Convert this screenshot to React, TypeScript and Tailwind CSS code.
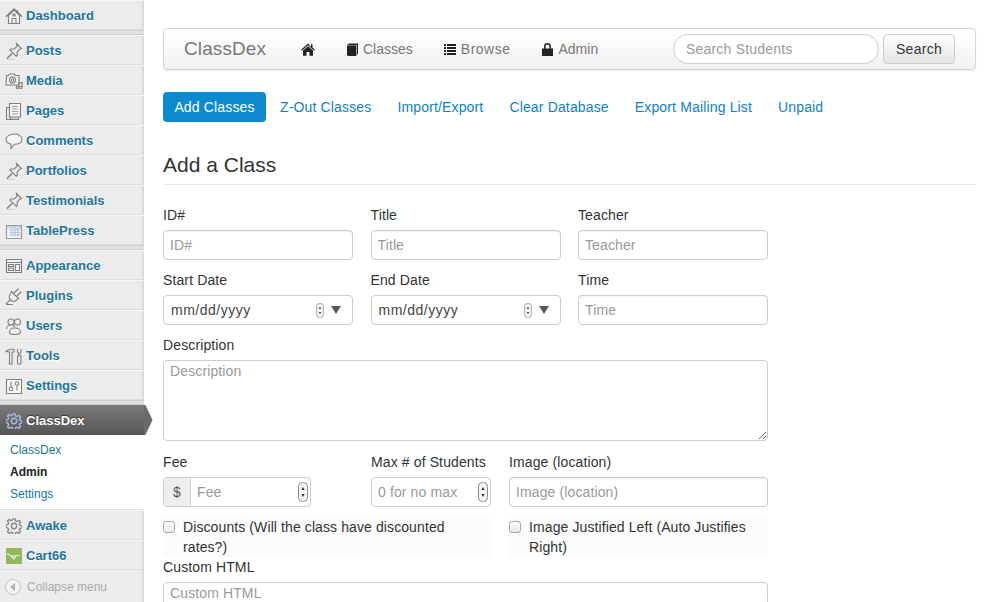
import React from 'react';

type IconProps = { className?: string };

const stroke = { fill: 'none', stroke: '#7f7f7f', strokeWidth: 1.1 };

const HouseIcon = () => (
  <svg width="18" height="18" viewBox="0 0 18 18" {...stroke}>
    <path d="M3.500 8.500v8h11v-8L9 3z" fill="#f6f6f6" />
    <path d="M1 9.800 9 2l8 7.800" strokeWidth="1.500" />
    <path d="M7 16.500v-5h4v5M12.500 3v3" />
    <path d="M8 7h2v2H8z" fill="#ccc" />
  </svg>
);
const PinIcon = () => (
  <svg width="18" height="18" viewBox="0 0 18 18" {...stroke}>
    <path d="M11.500 1.500l5 5-1.800.7-2.700 3.300.4 2.700-1.200 1.100-6.300-6.300 1.100-1.200 2.700.4 3.300-2.700z" fill="#e9e9e9" />
    <path d="M7 11.500 2 16.500" strokeWidth="1.400" />
    <path d="M1 17.500h9" stroke="#cfcfcf" />
  </svg>
);
const MediaIcon = () => (
  <svg width="18" height="18" viewBox="0 0 18 18" {...stroke}>
    <path d="M1.500 3.500h2l1-1.500h5l1 1.500h3.500v9.500h-13z" fill="#efefef" />
    <circle cx="7.500" cy="8" r="3" fill="#fafafa" />
    <circle cx="7.500" cy="8" r="1.200" />
    <circle cx="12.500" cy="15.500" r="1.200" />
    <circle cx="16" cy="15.500" r="1.200" />
    <path d="M13.700 15.500V11l3.400-.5V15" />
  </svg>
);
const PagesIcon = () => (
  <svg width="18" height="18" viewBox="0 0 18 18" {...stroke}>
    <path d="M1.500 5.500h4v12h8v-2" fill="#d9d9d9" />
    <path d="M1.500 5.500v12h4" />
    <path d="M4.500 1.500h11v13.500h-11z" fill="#f5f5f5" />
    <path d="M7 4.500h6M7 7h6M7 9.500h6M7 12h6" stroke="#a0a0a0" />
  </svg>
);
const CommentIcon = () => (
  <svg width="18" height="18" viewBox="0 0 18 18" {...stroke}>
    <path d="M9 2c4.200 0 8 1.900 8 5.200s-3.600 5-7.500 5L6 16.500V12C3 11.500 1 9.800 1 7.200S4.800 2 9 2z" fill="#f4f4f4" />
  </svg>
);
const TableIcon = () => (
  <svg width="18" height="18" viewBox="0 0 18 18" {...stroke}>
    <path d="M1.500 3.500h15v13h-15z" fill="#f4f4f4" stroke="#9a9a9a" />
    <path d="M2 4h14v2.500H2z" fill="#c3d2e4" stroke="none" />
    <path d="M4.500 8h11M4.500 10.500h11M4.500 13h11M7 6.500v8M10 6.500v8M13 6.500v8" stroke="#b3c3d8" />
  </svg>
);
const AppearanceIcon = () => (
  <svg width="18" height="18" viewBox="0 0 18 18" {...stroke}>
    <path d="M1.500 2.500h15v13h-15z" fill="#f4f4f4" />
    <path d="M1.500 5.500h15M3.500 7.500h5v2h-5zM3.500 11h5v2.500h-5zM10.500 7.500h4v6h-4z" />
  </svg>
);
const PlugIcon = () => (
  <svg width="18" height="18" viewBox="0 0 18 18" {...stroke}>
    <path d="M6.500 4.500l7 7-2.500 2c-1.500 1.200-3.800 1-5.300-.5s-1.700-3.800-.7-5.300z" fill="#efefef" />
    <path d="M9 6l4.500-4.500M12 9l4.500-4.500M5.500 12.500 2.500 15.500l-1.500 1.500M1 17.500h7" />
  </svg>
);
const UsersIcon = () => (
  <svg width="18" height="18" viewBox="0 0 18 18" {...stroke}>
    <circle cx="6" cy="5" r="3" fill="#f4f4f4" />
    <circle cx="12.500" cy="5" r="3" fill="#f4f4f4" />
    <path d="M1.500 12c0-2.500 2-4 4-4h1c2 0 3 1 3 2" fill="#f4f4f4" />
    <path d="M4.500 15.500c0-2.500 2-4.500 4.500-4.500h1.500c2.500 0 5 1.800 5 4 0 1.500-2 2.500-5.500 2.500s-5.500-.5-5.500-2z" fill="#f4f4f4" />
  </svg>
);
const ToolsIcon = () => (
  <svg width="18" height="18" viewBox="0 0 18 18" {...stroke}>
    <path d="M1 4.500c2-2 6-2.500 8-2v2.500H7v12H4.500V5z" fill="#efefef" />
    <path d="M12.500 2v3l1 1v3h-1v7c0 1.500 3.500 1.500 3.500 0V9h-1V6l1-1V2" fill="#efefef" />
  </svg>
);
const SettingsIcon = () => (
  <svg width="18" height="18" viewBox="0 0 18 18" {...stroke}>
    <path d="M1.500 2.500h15v14h-15z" fill="#f8f8f8" />
    <circle cx="6" cy="12" r="1.800" />
    <circle cx="12" cy="6.500" r="1.800" />
    <path d="M6 4.500v5.500M12 8.500v5" />
  </svg>
);
const GearIcon = ({ color = '#8a8a8a', fill = 'none' }: { color?: string; fill?: string }) => (
  <svg width="16" height="16" viewBox="0 0 18 18" fill={fill} stroke={color} strokeWidth="1.600">
    <path d="M7.700 1h2.600l.4 2.300 1.700.7 2-1.300 1.900 1.900-1.300 2 .7 1.700 2.300.4v2.600l-2.300.4-.7 1.700 1.300 2-1.900 1.900-2-1.300-1.700.7-.4 2.300H7.700l-.4-2.300-1.700-.7-2 1.300-1.900-1.900 1.300-2-.7-1.700L0 10.300V7.700l2.300-.4.7-1.700-1.300-2 1.900-1.900 2 1.300 1.700-.7z" />
    <circle cx="9" cy="9" r="3" />
  </svg>
);
const CartIcon = () => (
  <svg width="16" height="16" viewBox="0 0 16 16">
    <rect width="16" height="16" fill="#92b75f" />
    <path d="M1 5.500 5 8l9-.5M5 8l3 3 2-3" fill="none" stroke="#eef4e2" strokeWidth="1.200" />
  </svg>
);

const HomeGlyph = ({ className }: IconProps) => (
  <svg className={className} width="14" height="13" viewBox="0 0 14 13" fill="#222">
    <path d="M7 .5 0 6.800l.8.9L7 2.200l6.200 5.500.8-.9-2.500-2.200V1.200H10v2.700z" />
    <path d="M2 7.500 7 3.200l5 4.300v5.300H8.500V9h-3v3.800H2z" />
  </svg>
);
const BookGlyph = ({ className }: IconProps) => (
  <svg className={className} width="11" height="13" viewBox="0 0 11 13" fill="#222">
    <path d="M0 2 2 .5h9v10.500l-1 .5V2.200H2z" />
    <path d="M0 2.500h9.400V13H1.300L0 12z" />
  </svg>
);
const ListGlyph = ({ className }: IconProps) => (
  <svg className={className} width="12" height="11" viewBox="0 0 12 11" fill="#222">
    <path d="M0 0h2v2H0zM3 0h9v2H3zM0 3h2v2H0zM3 3h9v2H3zM0 6h2v2H0zM3 6h9v2H3zM0 9h2v2H0zM3 9h9v2H3z" />
  </svg>
);
const LockGlyph = ({ className }: IconProps) => (
  <svg className={className} width="11" height="13" viewBox="0 0 11 13">
    <path d="M0 5.500h11V13H0z" fill="#222" />
    <path d="M2.800 6V3.500a2.700 2.700 0 0 1 5.400 0V6" fill="none" stroke="#222" strokeWidth="1.500" />
  </svg>
);

const Spinner = ({ small }: { small?: boolean }) => (
  <svg width={small ? 8 : 10} height={small ? 15 : 20} viewBox="0 0 10 20" className="shrink-0">
    <rect x=".5" y=".5" width="9" height="19" rx="4" fill="#f4f4f4" stroke="#8c8c8c" />
    <path d="M5 5 3.400 8h3.200zM5 15 3.400 12h3.200z" fill="#333" />
  </svg>
);

const topMenu = [
  { label: 'Posts', icon: <PinIcon /> },
  { label: 'Media', icon: <MediaIcon /> },
  { label: 'Pages', icon: <PagesIcon /> },
  { label: 'Comments', icon: <CommentIcon /> },
  { label: 'Portfolios', icon: <PinIcon /> },
  { label: 'Testimonials', icon: <PinIcon /> },
  { label: 'TablePress', icon: <TableIcon /> },
];

const midMenu = [
  { label: 'Appearance', icon: <AppearanceIcon /> },
  { label: 'Plugins', icon: <PlugIcon /> },
  { label: 'Users', icon: <UsersIcon /> },
  { label: 'Tools', icon: <ToolsIcon /> },
  { label: 'Settings', icon: <SettingsIcon /> },
];

const SideRow = ({ label, icon }: { label: string; icon: React.ReactNode }) => (
  <div className="flex h-[30px] shrink-0 items-center gap-[3px] border-t border-b border-t-[#f6f6f6] border-b-[#dcdcdc] pt-[1px] pl-[5px] text-[13px] font-bold text-[#21759b] [text-shadow:0_1px_0_#fff]">
    <span className="flex w-[18px] justify-center">{icon}</span>
    <span>{label}</span>
  </div>
);

const Separator = () => <div className="h-[5px] shrink-0 border-y border-y-[#cfcfcf] bg-[#e0e0e0]" />;

const Sidebar = () => (
  <aside className="relative flex h-[602px] w-[144px] shrink-0 flex-col bg-[#ececec] shadow-[inset_-4px_0_3px_-3px_#cccccc]">
    <SideRow label="Dashboard" icon={<HouseIcon />} />
    <Separator />
    {topMenu.map(item => <SideRow key={item.label} {...item} />)}
    <Separator />
    {midMenu.map(item => <SideRow key={item.label} {...item} />)}
    <Separator />
    <div className="relative flex h-[30px] shrink-0 items-center gap-[3px] bg-gradient-to-b from-[#7b7b7b] to-[#555555] pt-[1px] pl-[5px] text-[13px] font-bold text-white [text-shadow:0_-1px_1px_#333]">
      <span className="flex w-[18px] justify-center"><GearIcon color="#a9b7dc" /></span>
      <span>ClassDex</span>
      <svg className="absolute left-full top-0" width="9" height="30" viewBox="0 0 9 30">
        <path d="M0 0h1.500L8.500 15 1.500 30H0z" fill="#6b6b6b" />
      </svg>
    </div>
    <div className="flex h-[75px] shrink-0 flex-col border-b border-b-[#dcdcdc] bg-white pt-[4px] pl-[10px] text-xs leading-[22px] text-[#21759b]">
      <span>ClassDex</span>
      <span className="font-bold text-[#222]">Admin</span>
      <span>Settings</span>
    </div>
    <SideRow label="Awake" icon={<GearIcon />} />
    <SideRow label="Cart66" icon={<CartIcon />} />
    <div className="flex h-[34px] shrink-0 items-center gap-[6px] pl-[5px] text-xs text-[#aaaaaa]">
      <span className="flex h-[16px] w-[16px] items-center justify-center rounded-full border border-[#c4c4c4] bg-[#f4f4f4]">
        <span className="mr-[2px] h-0 w-0 border-y-[4px] border-r-[5px] border-y-transparent border-r-[#b0b0b0]" />
      </span>
      Collapse menu
    </div>
  </aside>
);

const NavLink = ({ icon, label, className }: { icon: React.ReactNode; label?: string; className?: string }) => (
  <span className={`flex items-center gap-[5px] text-sm text-[#777777] ${className ?? ''}`}>
    {icon}
    {label}
  </span>
);

const Navbar = () => (
  <nav className="flex h-[42px] items-center rounded border border-[#d5d5d5] bg-gradient-to-b from-white to-[#f2f2f2] pl-[20px] pr-[20px] shadow-[0_1px_2px_rgba(0,0,0,0.07)]">
    <span className="w-[117px] text-[19px] tracking-[0.1px] text-[#777777]">ClassDex</span>
    <div className="flex items-center">
      <NavLink icon={<HomeGlyph />} />
      <span className="w-[32px]" />
      <NavLink icon={<BookGlyph />} label="Classes" />
      <span className="w-[31px]" />
      <NavLink icon={<ListGlyph />} label="Browse" className="tracking-[0.5px]" />
      <span className="w-[32px]" />
      <NavLink icon={<LockGlyph />} label="Admin" />
    </div>
    <div className="ml-auto flex items-center gap-[4px]">
      <input
        placeholder="Search Students"
        className="h-[30px] w-[206px] rounded-full border border-[#cccccc] bg-white px-[12px] text-sm tracking-[0.2px] outline-none placeholder:text-[#999999]"
      />
      <button className="h-[30px] w-[72px] rounded border border-[#cccccc] bg-gradient-to-b from-white to-[#e4e4e4] text-sm tracking-[0.3px] text-[#333333]">
        Search
      </button>
    </div>
  </nav>
);

const tabs = ['Z-Out Classes', 'Import/Export', 'Clear Database', 'Export Mailing List', 'Unpaid'];

const Tabs = () => (
  <div className="mt-[22px] flex h-[30px] items-center text-sm tracking-[0.15px] text-[#0e82c9]">
    <span className="flex h-[30px] w-[103px] items-center justify-center rounded bg-[#0d8acf] text-white">Add Classes</span>
    <div className="ml-[14px] flex gap-[26px]">
      {tabs.map(t => <span key={t}>{t}</span>)}
    </div>
  </div>
);

const inputCls = 'h-[30px] w-full rounded border border-[#cccccc] bg-white px-[6px] text-sm tracking-[0.12px] text-[#555555] outline-none placeholder:text-[#999999] shadow-[inset_0_1px_1px_rgba(0,0,0,0.05)]';

const areaCls = 'mt-[7px] block w-full rounded border border-[#cccccc] bg-white px-[6px] py-[2px] text-sm leading-[17px] tracking-[0.12px] outline-none placeholder:text-[#999999]';

const Label = ({ children }: { children: React.ReactNode }) => (
  <label className="block h-[15px] text-sm leading-[15px] tracking-[0.12px] text-[#333333]">{children}</label>
);

const Field = ({ label, width, children }: { label: string; width: string; children: React.ReactNode }) => (
  <div className={width}>
    <Label>{label}</Label>
    <div className="mt-[7px]">{children}</div>
  </div>
);

const DateInput = () => (
  <div className="flex h-[30px] items-center rounded border border-[#cccccc] bg-white pl-[7px] pr-[11px] text-sm text-[#444444]">
    <span className="flex-1 tracking-[0.5px]">mm/dd/yyyy</span>
    <Spinner small />
    <span className="ml-[7px] h-0 w-0 border-x-[5px] border-t-[8px] border-x-transparent border-t-[#555555]" />
  </div>
);

const NumberInput = ({ placeholder, addon }: { placeholder: string; addon?: boolean }) => (
  <div className="flex h-[30px] items-center rounded border border-[#cccccc] bg-white text-sm tracking-[0.12px] text-[#999999]">
    {addon && (
      <span className="flex h-full w-[27px] items-center justify-center rounded-l border-r border-[#cccccc] bg-[#eeeeee] text-[#555555]">$</span>
    )}
    <span className="flex-1 pl-[6px]">{placeholder}</span>
    <span className="mr-[2px] flex"><Spinner /></span>
  </div>
);

const CheckField = ({ width, children }: { width: string; children: React.ReactNode }) => (
  <div className={`${width} flex h-[40px] items-start bg-[#fbfbfb] text-sm leading-[20px] tracking-[0.1px] text-[#333333]`}>
    <span className="mt-[4px] h-[12px] w-[12px] shrink-0 rounded-[3px] border border-[#a9a9a9] bg-gradient-to-b from-white to-[#e8e8e8]" />
    <span className="ml-[8px] pr-[12px]">{children}</span>
  </div>
);

const Form = () => (
  <div className="mt-[23px] flex w-[605px] flex-col">
    <div className="flex justify-between">
      <Field label="ID#" width="w-[190px]"><input placeholder="ID#" className={inputCls} /></Field>
      <Field label="Title" width="w-[190px]"><input placeholder="Title" className={inputCls} /></Field>
      <Field label="Teacher" width="w-[190px]"><input placeholder="Teacher" className={inputCls} /></Field>
    </div>
    <div className="mt-[13px] flex justify-between">
      <Field label="Start Date" width="w-[190px]"><DateInput /></Field>
      <Field label="End Date" width="w-[190px]"><DateInput /></Field>
      <Field label="Time" width="w-[190px]"><input placeholder="Time" className={inputCls} /></Field>
    </div>
    <div className="mt-[13px]">
      <Label>Description</Label>
      <textarea placeholder="Description" className={`${areaCls} h-[81px]`} />
    </div>
    <div className="mt-[14px] flex">
      <Field label="Fee" width="w-[148px]"><NumberInput placeholder="Fee" addon /></Field>
      <div className="ml-[60px]"><Field label="Max # of Students" width="w-[120px]"><NumberInput placeholder="0 for no max" /></Field></div>
      <div className="ml-[18px] flex-1"><Field label="Image (location)" width="w-full"><input placeholder="Image (location)" className={inputCls} /></Field></div>
    </div>
    <div className="mt-[10px] flex">
      <CheckField width="w-[328px]">Discounts (Will the class have discounted rates?)</CheckField>
      <div className="ml-[18px] flex-1"><CheckField width="w-full">Image Justified Left (Auto Justifies Right)</CheckField></div>
    </div>
    <div className="mt-[3px]">
      <Label>Custom HTML</Label>
      <textarea placeholder="Custom HTML" className={`${areaCls} h-[81px] resize-none`} />
    </div>
  </div>
);

const App: React.FC = () => {
  return (
    <div className="flex h-[602px] w-[989px] overflow-hidden bg-white font-['Liberation_Sans',Arial,sans-serif]">
      <Sidebar />
      <main className="ml-[19px] w-[813px] pt-[28px]">
        <Navbar />
        <Tabs />
        <div className="mt-[28px] border-b border-[#e6e6e6] pb-[5px] text-[21px] leading-[29px] text-[#333333]">Add a Class</div>
        <Form />
      </main>
    </div>
  );
};

export default App;
